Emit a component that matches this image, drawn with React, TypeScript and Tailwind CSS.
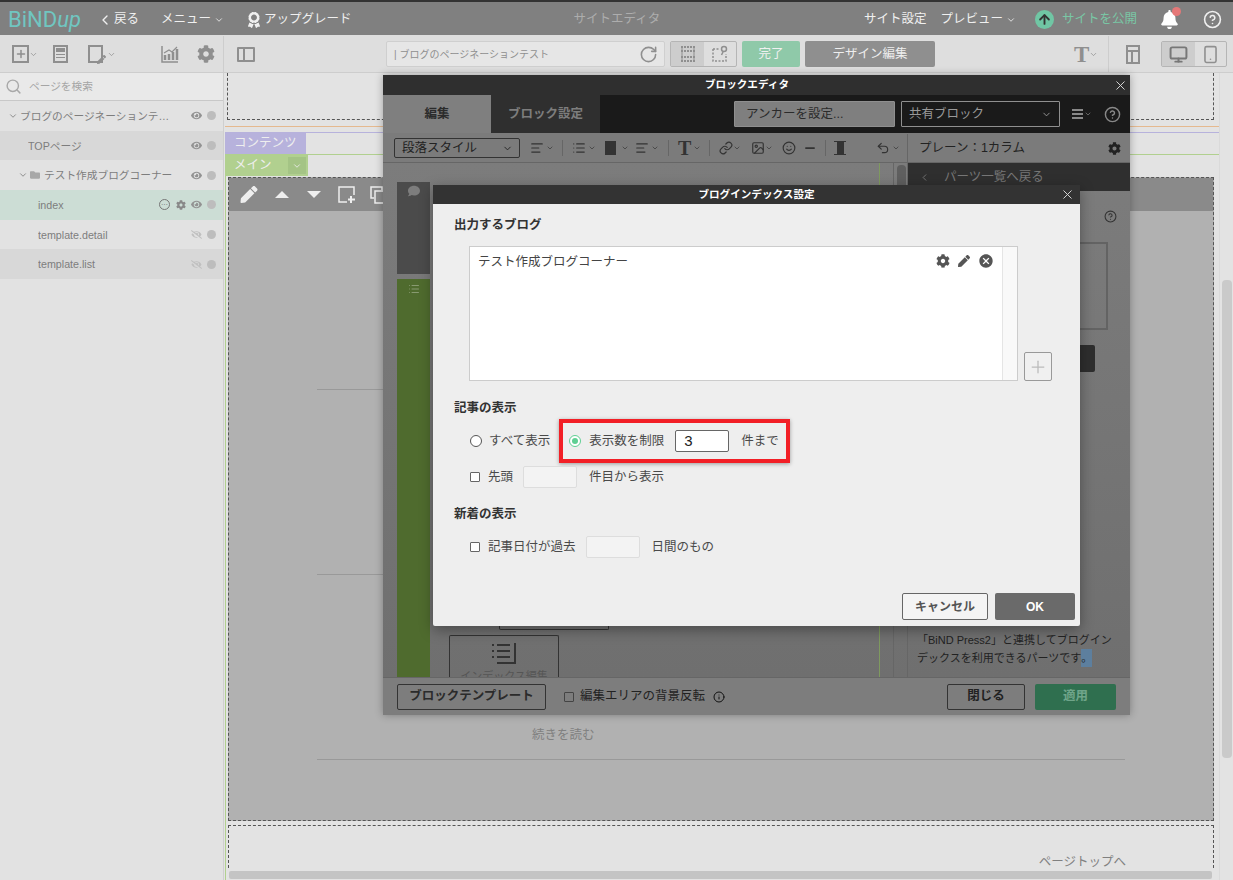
import { ChevronDown, ChevronLeft, Search, RotateCw, X, Plus, Info, HelpCircle, Monitor, Smartphone, List, AlignLeft, Link, Image, Smile, Minus, Undo2, ArrowUp } from 'lucide-react'
import { FaAward, FaBell, FaCog, FaComment, FaEye, FaEyeSlash, FaFolder, FaPen } from 'react-icons/fa'
import { MdCancel } from 'react-icons/md'

const jp = "font-['Liberation_Sans','Noto_Sans_CJK_JP',sans-serif]"

function TreeRow({ label, pad, bg, hidden, extra, chevron, folder, labelPad }: { label: string; pad: string; bg: string; hidden?: boolean; extra?: boolean; chevron?: boolean; folder?: boolean; labelPad?: string }) {
  return (
    <div className={`flex h-[29.7px] items-center pr-[7px] text-[10.7px] text-[#7d7d7d] ${pad} ${bg}`}>
      {chevron && <ChevronDown className="mr-[2px] h-[10px] w-[10px] shrink-0" />}
      {folder && <FaFolder className="mr-[4px] h-[10px] w-[10px] shrink-0 text-[#a8a8a8]" />}
      <span className={`flex-1 truncate ${labelPad ?? ''}`}>{label}</span>
      {extra && (
        <span className="mr-[5px] flex items-center gap-[6px]">
          <span className="flex h-[11px] w-[11px] items-center justify-center rounded-full border border-[#777] text-[7px] leading-none">⋯</span>
          <FaCog className="h-[10px] w-[10px] text-[#888]" />
        </span>
      )}
      {hidden ? <FaEyeSlash className="mr-[5px] h-[11px] w-[11px] text-[#c0c0c0]" /> : <FaEye className="mr-[5px] h-[11px] w-[11px] text-[#929292]" />}
      <span className="h-[9px] w-[9px] rounded-full bg-[#bdbdbd]" />
    </div>
  )
}

function Sidebar() {
  return (
    <aside className="flex w-[224px] shrink-0 flex-col border-r border-[#cfcfcf] bg-[#e2e2e2]">
      <div className="flex h-[28px] items-center gap-[7px] border-b border-[#c8c8c8] bg-[#e9e9e9] pl-[5px] text-[10.7px] text-[#a5a5a5]">
        <Search className="h-[17px] w-[17px] text-[#a8a8a8]" />
        ページを検索
      </div>
      <TreeRow label="ブログのページネーションテスト" pad="pl-[8px]" bg="bg-[#e2e2e2]" chevron labelPad="pr-[14px]" />
      <TreeRow label="TOPページ" pad="pl-[28px]" bg="bg-[#d8d8d8]" />
      <TreeRow label="テスト作成ブログコーナー" pad="pl-[18px]" bg="bg-[#e2e2e2]" chevron folder />
      <TreeRow label="index" pad="pl-[38px]" bg="bg-[#ccddd5]" extra />
      <TreeRow label="template.detail" pad="pl-[38px]" bg="bg-[#e2e2e2]" hidden />
      <TreeRow label="template.list" pad="pl-[38px]" bg="bg-[#d8d8d8]" hidden />
    </aside>
  )
}

function TopBar() {
  return (
    <header className="relative flex h-[35px] shrink-0 items-center border-t-[2px] border-[#333] bg-[#808080] pt-[2px] text-[12.5px] text-[#f0f0f0]">
      <div className="ml-[8px] w-[72px] font-['Roboto',sans-serif] text-[22px] leading-none text-[#70c6c1]">BiND<span className="italic">up</span></div>
      <div className="ml-[17px] flex items-center gap-[1px]"><ChevronLeft className="h-[16px] w-[16px]" />戻る</div>
      <div className="ml-[22px] flex items-center gap-[3px]">メニュー<ChevronDown className="h-[10px] w-[10px]" /></div>
      <div className="ml-[23px] flex items-center gap-[3px]"><FaAward className="h-[16px] w-[14px]" />アップグレード</div>
      <div className="ml-[222px] text-[#adadad]">サイトエディタ</div>
      <div className="ml-auto flex items-center">
        <span>サイト設定</span>
        <span className="ml-[14px] flex items-center gap-[3px]">プレビュー<ChevronDown className="h-[10px] w-[10px]" /></span>
        <span className="ml-[19px] flex h-[19px] w-[19px] items-center justify-center rounded-full bg-[#70c6a4]"><ArrowUp className="h-[15px] w-[15px] text-[#333]" strokeWidth={3} /></span>
        <span className="ml-[8px] text-[#79c7a5]">サイトを公開</span>
        <span className="relative ml-[23px]">
          <FaBell className="h-[19px] w-[19px] text-white" />
          <span className="absolute -top-[3px] right-[-2px] h-[9px] w-[9px] rounded-full bg-[#e57878]" />
        </span>
        <HelpCircle className="mr-[11px] ml-[24px] h-[19px] w-[19px]" />
      </div>
    </header>
  )
}

function ToolBar() {
  return (
    <div className="flex h-[38px] shrink-0 items-center border-b border-[#cdcdcd] bg-[#dedede] pt-[1px] text-[#8f8f8f]">
      <div className="flex w-[224px] shrink-0 items-center self-stretch border-r border-[#cdcdcd]">
        <span className="ml-[12px] flex h-[18px] w-[17px] items-center justify-center border-2 border-[#8f8f8f]"><Plus className="h-[12px] w-[12px]" strokeWidth={3} /></span>
        <ChevronDown className="h-[9px] w-[9px]" />
        <span className="ml-[15px] flex h-[18px] w-[15px] flex-col gap-[2px] border-2 border-[#8f8f8f] p-[1px]"><span className="h-[4px] bg-[#8f8f8f]" /><span className="h-[1px] bg-[#8f8f8f]" /><span className="h-[1px] bg-[#8f8f8f]" /></span>
        <span className="ml-[20px] flex h-[18px] w-[15px] items-end justify-end border-2 border-[#8f8f8f]"><FaPen className="mb-[-3px] mr-[-5px] h-[9px] w-[9px]" /></span>
        <ChevronDown className="ml-[4px] h-[9px] w-[9px]" />
        <svg className="ml-[45px] h-[18px] w-[18px]" viewBox="0 0 18 18" fill="none" stroke="currentColor">
          <path d="M1 1v16h16" strokeWidth="1.5" />
          <path d="M4 15v-5M8 15V9M12 15V7M16 15V4" strokeWidth="2.5" />
          <path d="M3 8l5-3 3 2 5-5" strokeWidth="1.2" />
        </svg>
        <FaCog className="ml-[18px] h-[18px] w-[18px]" />
      </div>
      <span className="ml-[13px] flex h-[15px] w-[18px] rounded-[1px] border-2 border-[#8f8f8f]">
        <span className="w-[6px] border-r-2 border-[#8f8f8f]" />
      </span>
      <div className="ml-[131px] flex h-[26px] w-[279px] items-center justify-between rounded-[2px] border border-[#cfcfcf] bg-[#e6e6e6] pr-[6px] pl-[7px] text-[10px]">
        | ブログのページネーションテスト
        <RotateCw className="h-[19px] w-[19px]" />
      </div>
      <div className="ml-[5px] flex h-[26px] w-[67px] rounded-[2px] border border-[#b5b5b5]">
        <span className="flex w-[33px] items-center justify-center bg-[#cdcdcd]">
          <svg className="h-[18px] w-[16px]" viewBox="0 0 16 18" fill="none" stroke="currentColor" strokeWidth="2">
            <path d="M1 2h14M1 6h14M1 12h14M1 16h14" strokeDasharray="2 1" />
            <path d="M2 2v14M14 2v14" strokeWidth="1" />
          </svg>
        </span>
        <span className="flex flex-1 items-center justify-center">
          <svg className="h-[18px] w-[18px]" viewBox="0 0 18 18" fill="none" stroke="currentColor">
            <path d="M2 4h7M2 4v12h13V9" strokeWidth="1.5" strokeDasharray="2 1.5" />
            <circle cx="13" cy="4" r="2.5" strokeWidth="1.5" />
            <path d="M12 7l-1.5 3" strokeWidth="1.5" />
          </svg>
        </span>
      </div>
      <div className="ml-[5px] flex h-[26px] w-[58px] items-center justify-center rounded-[2px] bg-[#8fc9a9] text-[12.5px] text-[#f0f0f0]">完了</div>
      <div className="ml-[5px] flex h-[26px] w-[130px] items-center justify-center rounded-[2px] bg-[#8f8f8f] text-[12.5px] text-[#eeeeee]">デザイン編集</div>
      <span className="ml-[139px] font-['Liberation_Serif',serif] text-[23px] leading-none font-bold">T</span>
      <ChevronDown className="h-[9px] w-[9px]" />
      <div className="ml-[10px] flex items-center self-stretch border-l border-[#cdcdcd] pl-[17px]">
        <span className="flex h-[19px] w-[14px] flex-col border-2 border-[#8f8f8f]">
          <span className="h-[5px] border-b-2 border-[#8f8f8f]" />
          <span className="ml-[3px] flex-1 border-l-2 border-[#8f8f8f]" />
        </span>
      </div>
      <div className="ml-[21px] flex h-[26px] w-[66px] rounded-[2px] border border-[#b5b5b5]">
        <span className="flex w-[33px] items-center justify-center bg-[#cdcdcd]"><Monitor className="h-[19px] w-[19px] text-[#777]" strokeWidth={2.5} /></span>
        <span className="flex flex-1 items-center justify-center"><Smartphone className="h-[19px] w-[19px]" /></span>
      </div>
    </div>
  )
}

function Canvas() {
  return (
    <div className="flex flex-1 overflow-hidden bg-[#e3e3e3]">
      <div className="flex w-[996px] shrink-0 flex-col overflow-hidden border-r border-[#dadada] pl-[1px]">
        <div className="h-[54px] shrink-0 border-b border-[#e5b98f] pr-[5px] pl-[2px]">
          <div className="h-[47px] border-x border-b border-dashed border-[#555]" />
        </div>
        <div className="mt-[5px] h-[22px] shrink-0 border-t border-[#b7b2dc]">
          <div className="flex h-[21px] w-[81px] items-center bg-[#b7b2dc] pl-[9px] text-[12.5px] text-[#eeeeee]">コンテンツ</div>
        </div>
        <div className="h-[22px] shrink-0 border-t border-[#b1d08f]">
          <div className="flex h-[21px] w-[83px] items-center bg-[#b1d08f] pl-[9px] text-[12.5px] text-[#eeeeee]">
            メイン
            <span className="ml-auto mr-[2px] flex h-[17px] w-[18px] items-center justify-center bg-[#a4c485]"><ChevronDown className="h-[10px] w-[10px]" /></span>
          </div>
        </div>
        <div className="flex flex-1 flex-col border-l border-[#b1d08f] pt-[1px] pl-[2px]">
          <div className="mr-[5px] h-[644px] shrink-0 border border-dashed border-[#555] bg-[#b1b1b1]">
            <div className="flex h-[33px] items-center gap-[14.5px] bg-[#8a8a8a] pl-[11px] text-[#eeeeee]">
              <FaPen className="h-[17px] w-[18px]" />
              <svg className="h-[9px] w-[18px]" viewBox="0 0 18 9" fill="currentColor"><polygon points="9,1 16,8 2,8" /></svg>
              <svg className="h-[9px] w-[18px]" viewBox="0 0 18 9" fill="currentColor"><polygon points="2,1 16,1 9,8" /></svg>
              <svg className="h-[18px] w-[18px]" viewBox="0 0 18 18" fill="none" stroke="currentColor" strokeWidth="1.5"><path d="M9 16H1V1h15v8" /><path d="M13 10v7M10 13.500h7" strokeWidth="2" /></svg>
              <svg className="h-[18px] w-[18px]" viewBox="0 0 18 18" fill="none" stroke="currentColor" strokeWidth="1.5"><path d="M4 12H1V1h11v3" /><rect x="5" y="5" width="12" height="12" /></svg>
            </div>
            <div className="mx-[88px] mt-[178px] border-t border-[#999]" />
            <div className="mx-[88px] mt-[184px] border-t border-[#999]" />
            <div className="ml-[303px] mt-[152px] text-[12.5px] leading-[16px] text-[#808080]">続きを読む</div>
            <div className="mx-[88px] mt-[16px] border-t border-[#999]" />
          </div>
          <div className="mt-[4px] mr-[5px] flex flex-1 items-end justify-end border-x border-t border-dashed border-[#555] pr-[87px] text-[12.5px] leading-[12px] text-[#808080]">
            ページトップへ
          </div>
          <div className="mt-[3px] mr-[7px] mb-[1px] ml-[1px] h-[8px] shrink-0 rounded-[2px] bg-[#c4c4c4]" />
        </div>
      </div>
      <div className="ml-[2px] mt-[207px] mb-[122px] w-[10px] rounded-[4px] bg-[#cacaca]" />
    </div>
  )
}

function EditorToolIcons() {
  const c = 'h-[14px] w-[14px] shrink-0 text-[#333]'
  const d = 'h-[8px] w-[8px] shrink-0 text-[#333]'
  return (
    <div className="flex items-center">
      <AlignLeft className={`ml-[10px] ${c}`} /><ChevronDown className={`ml-[2px] ${d}`} />
      <span className="ml-[8px] h-[16px] border-l border-[#666]" />
      <List className={`ml-[9px] ${c}`} /><ChevronDown className={`ml-[2px] ${d}`} />
      <span className="ml-[9px] h-[14px] w-[11px] bg-[#333]" /><ChevronDown className={`ml-[5px] ${d}`} />
      <AlignLeft className={`ml-[6px] ${c}`} /><ChevronDown className={`ml-[2px] ${d}`} />
      <span className="ml-[9px] h-[16px] border-l border-[#666]" />
      <span className="ml-[9px] w-[14px] font-['Liberation_Serif',serif] text-[20px] leading-none font-bold text-[#333]">T</span><ChevronDown className={`ml-[1px] ${d}`} />
      <span className="ml-[8px] h-[16px] border-l border-[#666]" />
      <Link className={`ml-[9px] ${c}`} /><ChevronDown className={d} />
      <Image className={`ml-[10px] ${c}`} /><ChevronDown className={d} />
      <Smile className={`ml-[9px] ${c}`} />
      <Minus className={`ml-[7px] ${c}`} strokeWidth={3} />
      <span className="ml-[8px] h-[16px] border-l border-[#666]" />
      <span className="ml-[8px] flex h-[14px] w-[12px] justify-center border-y border-[#333]"><span className="w-[7px] bg-[#333]" /></span>
      <Undo2 className={`ml-[30px] ${c}`} /><ChevronDown className={`ml-[2px] ${d}`} />
    </div>
  )
}

function BlockEditor() {
  return (
    <section className="absolute top-[75px] left-[383px] flex h-[640px] w-[747px] flex-col bg-[#7a7a7a] text-[#2b2b2b] shadow-[0_0_8px_rgba(0,0,0,0.3)]">
      <div className="relative flex h-[20px] shrink-0 items-center justify-center bg-[#2f2f2f] pr-[19px] text-[10.6px] font-bold text-white">
        ブロックエディタ
        <X className="absolute right-[2px] h-[15px] w-[15px] text-[#dddddd]" strokeWidth={1.5} />
      </div>
      <div className="flex h-[38px] shrink-0 items-center bg-[#1a1a1a] text-[12.5px]">
        <div className="flex h-full w-[108px] items-center justify-center bg-[#7f7f7f] font-bold text-[#2b2b2b]">編集</div>
        <div className="flex h-full w-[109px] items-center justify-center bg-[#2f2f2f] font-bold text-[#7d7d7d]">ブロック設定</div>
        <div className="ml-[134px] flex h-[26px] w-[161px] items-center rounded-[1px] border border-[#8f8f8f] bg-[#7f7f7f] pl-[11px] text-[#2b2b2b]">アンカーを設定...</div>
        <div className="ml-[6px] flex h-[26px] w-[159px] items-center justify-between rounded-[1px] border border-[#8f8f8f] px-[7px] text-[#999]">
          共有ブロック<ChevronDown className="h-[11px] w-[11px]" />
        </div>
        <span className="ml-[12px] flex h-[10px] w-[11px] flex-col justify-between">
          <span className="h-[2px] bg-[#888]" /><span className="h-[2px] bg-[#888]" /><span className="h-[2px] bg-[#888]" />
        </span>
        <ChevronDown className="ml-[1px] h-[8px] w-[8px] text-[#888]" />
        <HelpCircle className="ml-[12px] h-[17px] w-[17px] text-[#888]" />
      </div>
      <div className="flex h-[30px] shrink-0 items-center border-b border-[#666] bg-[#7b7b7b] pt-[1px]">
        <div className="ml-[11px] flex h-[20px] w-[126px] shrink-0 items-center justify-between rounded-[2px] border border-[#333] pr-[6px] pl-[7px] text-[12.5px] text-[#222]">
          段落スタイル<ChevronDown className="h-[11px] w-[11px]" />
        </div>
        <EditorToolIcons />
        <div className="ml-auto flex h-full w-[223px] items-center justify-between border-l border-[#666] pr-[9px] pl-[11px] text-[12.5px] text-[#222]">
          プレーン：1カラム<FaCog className="h-[13px] w-[13px] text-[#222]" />
        </div>
      </div>
      <div className="flex min-h-0 flex-1 bg-gradient-to-b from-[#7c7c7c] to-[#6f6f6f]">
        <div className="ml-[14px] flex w-[33px] shrink-0 flex-col pt-[19px]">
          <div className="flex h-[92px] justify-center bg-[#4b4b4b] pt-[3px]"><FaComment className="h-[12px] w-[12px] text-[#7d7d7d]" /></div>
          <div className="mt-[5px] flex flex-1 justify-center bg-[#4f6b2e] pt-[4px]"><List className="h-[12px] w-[12px] text-[#889a70]" /></div>
        </div>
        <div className="flex flex-1 flex-col justify-end border-r border-[#7f9a5f] pl-[19px]">
          <div className="ml-[50px] h-[10px] w-[110px] rounded-b-[2px] border-x border-b border-[#333]" />
          <div className="mt-[5px] flex h-[42px] w-[110px] flex-col items-center overflow-hidden rounded-t-[2px] border-x border-t border-[#333] pt-[6px]">
            <svg className="h-[23px] w-[26px] shrink-0 text-[#333]" viewBox="0 0 26 23" fill="none" stroke="currentColor" strokeWidth="2">
              <path d="M1 3h2M6 3h13M1 9h2M6 9h13M1 15h2M6 15h13M24 1v20H6" />
            </svg>
            <span className="mt-[4px] text-[11px] leading-[14px] whitespace-nowrap text-[#555]">インデックス編集</span>
          </div>
        </div>
        <div className="ml-[13px] w-[14px] shrink-0 border-l border-[#666] pt-[2px] pl-[3px]"><div className="h-[24px] w-[9px] rounded-[4px] bg-[#5f5f5f]" /></div>
        <div className="flex w-[223px] shrink-0 flex-col border-l border-[#666]">
          <div className="flex h-[28px] items-center gap-[14px] bg-[#2f2f2f] pl-[11px] text-[12.5px] text-[#777]">
            <ChevronLeft className="h-[11px] w-[11px]" />パーツ一覧へ戻る
          </div>
          <div className="flex justify-end pt-[19px] pr-[13px]"><HelpCircle className="h-[13px] w-[13px] text-[#333]" /></div>
          <div className="mt-[19px] mr-[22px] h-[88px] border-2 border-[#636363]" />
          <div className="mt-[15px] mr-[35px] h-[27px] rounded-[2px] bg-[#2e2e2e]" />
          <div className="mt-auto mb-[10px] px-[9px] text-[11px] leading-[18px] text-[#222]">
            <div>「BiND Press2」と連携してブログイン</div>
            <div className="flex">デックスを利用できるパーツです<span className="bg-[#5d7f9e]">。</span></div>
          </div>
        </div>
      </div>
      <div className="flex h-[38px] shrink-0 items-center border-t border-[#666] bg-[#7d7d7d] pr-[14px] pl-[14px] text-[12.5px] text-[#222]">
        <div className="flex h-[26px] w-[149px] items-center justify-center rounded-[2px] border border-[#333] font-bold text-[#2b2b2b]">ブロックテンプレート</div>
        <span className="ml-[18px] h-[10px] w-[10px] rounded-[1px] border border-[#444]" />
        <span className="ml-[6px]">編集エリアの背景反転</span>
        <Info className="ml-[8px] h-[12px] w-[12px] text-[#111]" />
        <div className="ml-auto flex h-[26px] w-[78px] items-center justify-center rounded-[2px] border border-[#333] font-bold">閉じる</div>
        <div className="ml-[10px] flex h-[26px] w-[81px] items-center justify-center rounded-[2px] bg-[#2f6f4f] font-bold text-[#6fa58a]">適用</div>
      </div>
    </section>
  )
}

function Radio({ on }: { on?: boolean }) {
  return (
    <span className={`flex h-[12px] w-[12px] shrink-0 items-center justify-center rounded-full border ${on ? 'border-[#5fcf93] bg-white' : 'border-[#555] bg-white'}`}>
      {on && <span className="h-[6px] w-[6px] rounded-full bg-[#5fcf93]" />}
    </span>
  )
}

const Check = () => <span className="h-[10px] w-[10px] shrink-0 rounded-[1px] border border-[#666] bg-white" />
const EmptyInput = () => <span className="block h-[22px] w-[54px] shrink-0 rounded-[2px] border border-[#ddd] bg-[#f3f3f3]" />

function BlogIndexDialog() {
  return (
    <section className="absolute top-[185px] left-[433px] flex h-[441px] w-[647px] flex-col rounded-b-[2px] bg-[#eeeeee] text-[12.5px] text-[#4a4a4a] shadow-[0_4px_14px_rgba(0,0,0,0.35)]">
      <div className="relative flex h-[19px] shrink-0 items-center justify-center bg-[#333] text-[10.6px] font-bold text-white">
        ブログインデックス設定
        <X className="absolute right-[5px] h-[15px] w-[15px] text-[#dddddd]" strokeWidth={1.5} />
      </div>
      <div className="flex flex-1 flex-col px-[21px]">
        <h2 className="mt-[11px] text-[12.5px] leading-[20px] font-bold text-[#333]">出力するブログ</h2>
        <div className="mt-[11px] ml-[15px] flex items-end">
          <div className="flex h-[135px] w-[549px] border border-[#cccccc] bg-white">
            <div className="flex flex-1 items-start justify-between pt-[6px] pr-[8px] pl-[8px] text-[12.5px] text-[#444]">
              テスト作成ブログコーナー
              <span className="flex items-center gap-[8px] text-[#555]">
                <FaCog className="h-[14px] w-[14px]" />
                <FaPen className="h-[12px] w-[12px]" />
                <MdCancel className="h-[16px] w-[16px]" />
              </span>
            </div>
            <div className="w-[15px] border-l border-[#e5e5e5] bg-[#f9f9f9]" />
          </div>
          <div className="ml-[6px] flex h-[29px] w-[28px] items-center justify-center rounded-[2px] border border-[#999] bg-[#f0f0f0]"><Plus className="h-[20px] w-[20px] text-[#bbb]" strokeWidth={1.5} /></div>
        </div>
        <h2 className="mt-[17px] text-[12.5px] leading-[20px] font-bold text-[#333]">記事の表示</h2>
        <div className="mt-[1px] ml-[16px] flex h-[44px] items-center">
          <Radio />
          <span className="ml-[7px]">すべて表示</span>
          <div className="ml-[9px] flex h-[44px] w-[231px] items-center border-[4px] border-[#f21f26] pl-[6px] shadow-[0_1px_4px_rgba(0,0,0,0.35)]">
            <Radio on />
            <span className="ml-[8px]">表示数を制限</span>
            <span className="ml-[11px] flex h-[22px] w-[54px] items-center rounded-[2px] border border-[#666] bg-white pl-[8px] font-['Liberation_Sans',sans-serif] text-[15px] text-[#222]">3</span>
            <span className="ml-[12px]">件まで</span>
          </div>
        </div>
        <div className="mt-[3px] ml-[16px] flex h-[22px] items-center">
          <Check />
          <span className="ml-[8px]">先頭</span>
          <span className="ml-[10px]"><EmptyInput /></span>
          <span className="ml-[12px]">件目から表示</span>
        </div>
        <h2 className="mt-[16px] text-[12.5px] leading-[20px] font-bold text-[#333]">新着の表示</h2>
        <div className="mt-[12px] ml-[16px] flex h-[22px] items-center">
          <Check />
          <span className="ml-[8px]">記事日付が過去</span>
          <span className="ml-[10px]"><EmptyInput /></span>
          <span className="ml-[12px]">日間のもの</span>
        </div>
      </div>
      <div className="flex justify-end gap-[7px] pr-[5px] pb-[6px] text-[12px]">
        <div className="flex h-[27px] w-[86px] items-center justify-center rounded-[2px] border border-[#666] bg-[#f4f4f4] font-bold text-[#555]">キャンセル</div>
        <div className="flex h-[27px] w-[80px] items-center justify-center rounded-[2px] bg-[#6a6a6a] font-bold text-white">OK</div>
      </div>
    </section>
  )
}

export default function App() {
  return (
    <div className={`relative flex h-[880px] w-[1233px] flex-col overflow-hidden ${jp}`}>
      <TopBar />
      <ToolBar />
      <div className="flex min-h-0 flex-1">
        <Sidebar />
        <Canvas />
      </div>
      <BlockEditor />
      <BlogIndexDialog />
    </div>
  )
}
